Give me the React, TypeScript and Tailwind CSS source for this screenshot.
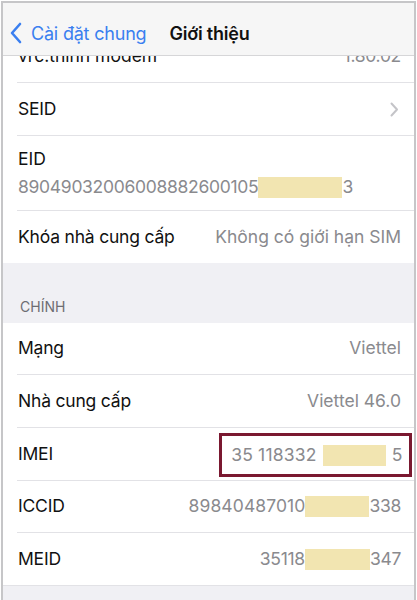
import React from "react";

const F = { fontFamily: "Inter, 'Liberation Sans', sans-serif" };

function Hl({ w }: { w: number }) {
  return <span className="inline-block h-[21px] bg-[#f2e5b1] align-middle" style={{ width: w }} />;
}

function Row({ label, children, h, border = true }: { label: string; children?: React.ReactNode; h: string; border?: boolean }) {
  return (
    <div className={`ml-[14px] flex items-center justify-between pr-[13px] ${h} ${border ? "border-b border-[#e2e2e6]" : ""}`}>
      <span className="pl-[1px] text-[17.5px] text-[#111] tracking-[-0.2px]">{label}</span>
      <span className="flex items-center whitespace-nowrap text-[17.5px] text-[#8a8a8e]">{children}</span>
    </div>
  );
}

function Num({ children }: { children: React.ReactNode }) {
  return <span className="tracking-[-0.3px]">{children}</span>;
}

export default function App() {
  return (
    <div className="w-[417px] h-[600px] overflow-hidden bg-white pl-[1px] pt-[1px] pr-[1px]" style={F}>
      <div className="h-[599px] border-l-2 border-t-2 border-r-2 border-[#c6c6c8] bg-white overflow-hidden">
        <div className="h-[53px] bg-[#f6f6f6] border-b border-[#d6d6d8] flex items-center pt-[8px]">
          <svg width="14" height="22" viewBox="0 0 14 22" className="ml-[6px]">
            <path d="M11 2 L3 11 L11 20" fill="none" stroke="#3a7ff0" strokeWidth="2.6" strokeLinecap="round" strokeLinejoin="round" />
          </svg>
          <span className="ml-[8px] text-[18px] text-[#3a7ff0] tracking-[-0.2px]">Cài đặt chung</span>
          <span className="ml-[23px] text-[18px] font-semibold text-[#111] tracking-[-0.2px]">Giới thiệu</span>
        </div>
        <div className="ml-[14px] h-[27px] overflow-hidden border-b border-[#e2e2e6] pr-[13px]">
          <div className="-mt-[13px] flex justify-between text-[17.5px]">
            <span className="pl-[1px] text-[#111]">vrc.thinh modem</span>
            <span className="text-[#8a8a8e]"><Num>1.80.02</Num></span>
          </div>
        </div>
        <Row label="SEID" h="h-[53px]">
          <svg width="9" height="15" viewBox="0 0 9 15" className="mr-[2px]">
            <path d="M1.5 1.5 L7 7.5 L1.5 13.5" fill="none" stroke="#c4c4c8" strokeWidth="2" strokeLinecap="round" strokeLinejoin="round" />
          </svg>
        </Row>
        <div className="ml-[14px] h-[75px] border-b border-[#e2e2e6] flex flex-col justify-center">
          <span className="pl-[1px] text-[17.5px] text-[#111] leading-[24px]">EID</span>
          <span className="pl-[1px] mt-[4px] text-[17.5px] text-[#8a8a8e] leading-[24px] flex items-center whitespace-nowrap">
            <Num>89049032006008882600105</Num><Hl w={84} /><Num>3</Num>
          </span>
        </div>
        <Row label="Khóa nhà cung cấp" h="h-[52px]" border={false}>
          Không có giới hạn SIM
        </Row>
        <div className="h-[60px] bg-[#f0f0f4] flex items-end pb-[6px] pl-[17px] text-[14px] text-[#6d6d72]">CHÍNH</div>
        <Row label="Mạng" h="h-[52px]">Viettel</Row>
        <Row label="Nhà cung cấp" h="h-[53px]">Viettel 46.0</Row>
        <Row label="IMEI" h="h-[53px]">
          <span className="-mr-[11px] mt-[2px] flex h-[44px] w-[193px] items-center justify-end border-[3px] border-[#7a1830] pr-[7px]">
            <span className="tracking-[0.2px]">35 118332</span><span className="w-[6px]" />
            <Hl w={63} />
            <span className="w-[6px]" /><Num>5</Num>
          </span>
        </Row>
        <Row label="ICCID" h="h-[52px]">
          <span className="tracking-[0.1px]">89840487010</span><Hl w={64} /><Num>338</Num>
        </Row>
        <Row label="MEID" h="h-[52px]" border={false}>
          <Num>35118</Num><Hl w={65} /><Num>347</Num>
        </Row>
        <div className="h-[20px] bg-[#f0f0f4] border-t border-[#e2e2e6]" />
      </div>
    </div>
  );
}
